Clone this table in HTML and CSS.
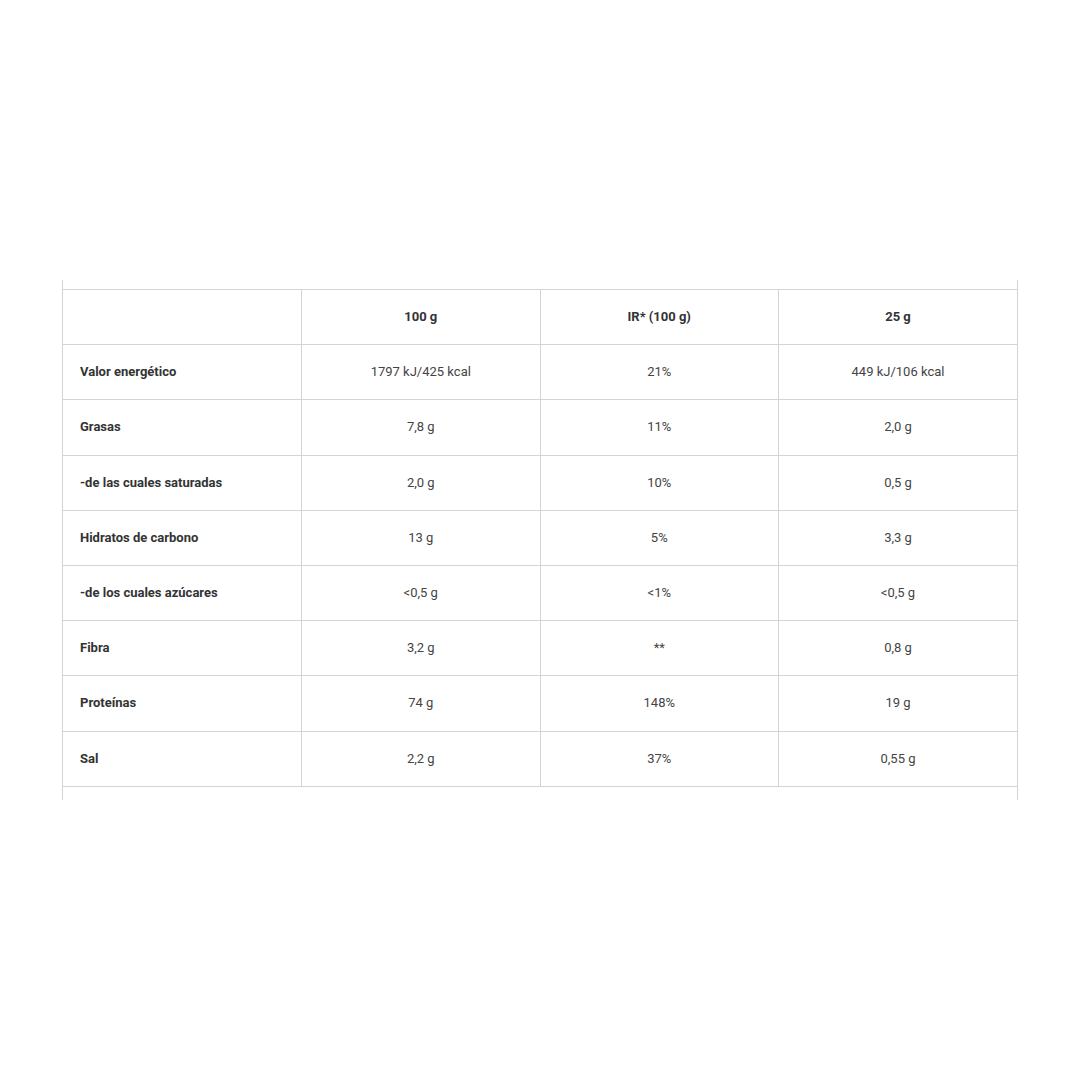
FILE: index.html
```html
<!DOCTYPE html>
<html lang="es">
<head>
<meta charset="utf-8">
<title>Información nutricional</title>
<link rel="stylesheet" href="styles.css">
</head>
<body>
<div class="wrap">
<table class="nutri">
<thead>
<tr><th></th><th>100 g</th><th>IR* (100 g)</th><th>25 g</th></tr>
</thead>
<tbody>
<tr><th>Valor energético</th><td>1797 kJ/425 kcal</td><td>21%</td><td>449 kJ/106 kcal</td></tr>
<tr><th>Grasas</th><td>7,8 g</td><td>11%</td><td>2,0 g</td></tr>
<tr><th>-de las cuales saturadas</th><td>2,0 g</td><td>10%</td><td>0,5 g</td></tr>
<tr><th>Hidratos de carbono</th><td>13 g</td><td>5%</td><td>3,3 g</td></tr>
<tr><th>-de los cuales azúcares</th><td>&lt;0,5 g</td><td>&lt;1%</td><td>&lt;0,5 g</td></tr>
<tr><th>Fibra</th><td>3,2 g</td><td>**</td><td>0,8 g</td></tr>
<tr><th>Proteínas</th><td>74 g</td><td>148%</td><td>19 g</td></tr>
<tr><th>Sal</th><td>2,2 g</td><td>37%</td><td>0,55 g</td></tr>
</tbody>
</table>
</div>
</body>
</html>
```
FILE: styles.css
```css
html, body {
  margin: 0;
  padding: 0;
  background: #fff;
}
body {
  font-family: Roboto, "Liberation Sans", sans-serif;
  font-size: 13px;
  color: #333;
}
.wrap {
  margin: 280px 62px 0;
  border-left: 1px solid #d4d4d4;
  border-right: 1px solid #d4d4d4;
  padding: 9px 0 13px;
}
.nutri {
  width: 100%;
  border-collapse: collapse;
  table-layout: fixed;
}
.nutri th,
.nutri td {
  border: 1px solid #d4d4d4;
  padding: 17.1px 17px;
  line-height: 20px;
  text-align: center;
  font-weight: 400;
  color: #444;
}
.nutri th {
  font-weight: 700;
  color: #333;
}
.nutri tbody th {
  text-align: left;
}
.nutri tr > :first-child {
  border-left: none;
}
.nutri tr > :last-child {
  border-right: none;
}
```
